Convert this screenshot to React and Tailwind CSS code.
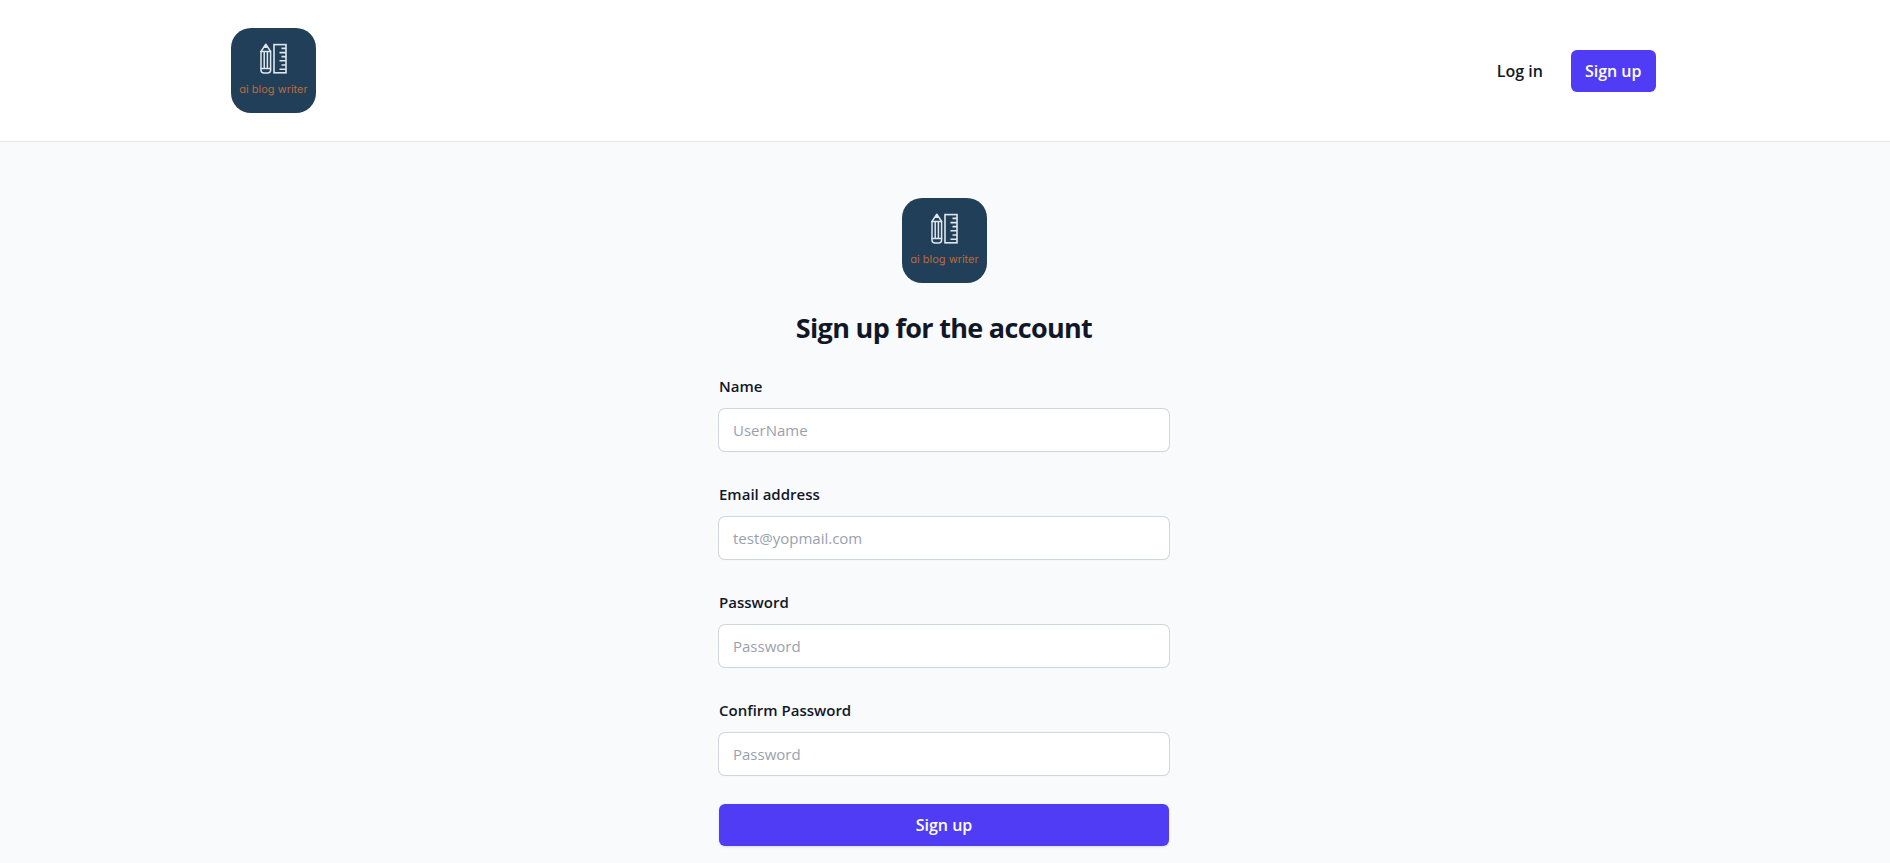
const fields = [
  { id: "name", label: "Name", type: "text", placeholder: "UserName" },
  { id: "email", label: "Email address", type: "email", placeholder: "test@yopmail.com" },
  { id: "password", label: "Password", type: "password", placeholder: "Password" },
  { id: "confirmPassword", label: "Confirm Password", type: "password", placeholder: "Password" },
];

function Logo() {
  return (
    <svg viewBox="0 0 85 85" className="w-[85px] h-[85px]" role="img" aria-label="ai blog writer">
      <rect width="85" height="85" rx="20" fill="#213f58" />

      {/* Pencil */}
      <g fill="none" stroke="#dfe7ed" strokeWidth="1.5" strokeLinejoin="round" strokeLinecap="round">
        <path d="M30 23.5 L34.8 16.2 L39.6 23.5 V42 Q39.6 45 36.6 45 H33 Q30 45 30 42 Z" />
        <path d="M30 23.5 H39.6 M30 40.5 H39.6" />
        <path d="M33.2 24 V40 M36.4 24 V40" />
        <path d="M33.6 19.2 H36 L34.8 17 Z" />
      </g>

      {/* Ruler */}
      <g fill="none" stroke="#dfe7ed" strokeWidth="1.6">
        <rect x="43" y="16.6" width="12" height="28.2" />
        <path d="M50.5 20.4 H55 M48.5 24.6 H55 M50.5 28.6 H55 M48.5 32.8 H55 M50.5 37 H55 M48.5 41.2 H55" />
      </g>

      <text
        x="42.5"
        y="65"
        textAnchor="middle"
        textRendering="geometricPrecision"
        fill="#bc6a3b"
        className="font-['Inter',sans-serif] text-[11px] font-normal [font-feature-settings:'cv11']"
      >
        ai blog writer
      </text>
    </svg>
  );
}

function Header() {
  return (
    <header className="bg-white border-b border-gray-200 pl-6 pr-7">
      <div className="w-full max-w-[1425px] mx-auto py-7 flex items-center justify-between">
        <a href="#">
          <Logo />
        </a>

        <nav className="flex items-center gap-7 text-base font-semibold">
          <a href="#login" className="text-gray-900">
            Log in
          </a>
          <a href="#signup" className="h-[42px] px-3.5 flex items-center rounded-md bg-[#503cf5] text-white">
            Sign up
          </a>
        </nav>
      </div>
    </header>
  );
}

function Field({ id, label, type, placeholder }) {
  return (
    <div>
      <label htmlFor={id} className="block text-[15px] leading-7 font-semibold text-gray-900">
        {label}
      </label>
      <input
        id={id}
        name={id}
        type={type}
        placeholder={placeholder}
        className="mt-[9px] block w-full h-[42px] px-3.5 rounded-md bg-white text-[15px] text-gray-900 placeholder:text-gray-400 ring-1 ring-gray-300 shadow-xs outline-none focus:ring-2 focus:ring-indigo-600"
      />
    </div>
  );
}

export default function App() {
  return (
    <div className="min-h-screen bg-[#f9fafc] font-['Open_Sans',sans-serif]">
      <Header />

      <main className="pl-6 pr-[26px] pt-14 pb-4">
        <div className="w-full max-w-[450px] mx-auto">
          <div className="flex justify-center">
            <Logo />
          </div>

          <h1 className="mt-6 text-center text-[27px] leading-[42px] font-bold tracking-tight text-gray-900">
            Sign up for the account
          </h1>

          <form className="mt-[23px] flex flex-col gap-[29px]">
            {fields.map((field) => (
              <Field key={field.id} {...field} />
            ))}

            <button
              type="submit"
              className="w-full h-[42px] rounded-md bg-[#503cf5] text-base font-semibold text-white shadow-sm"
            >
              Sign up
            </button>
          </form>
        </div>
      </main>
    </div>
  );
}
